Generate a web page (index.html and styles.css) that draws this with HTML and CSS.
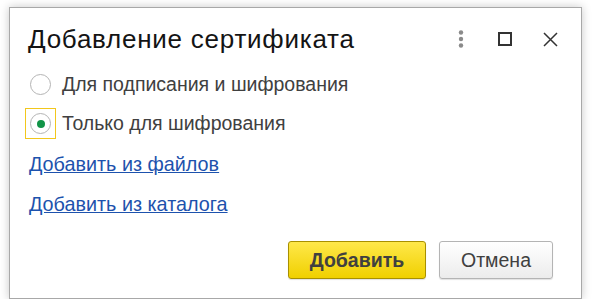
FILE: index.html
```html
<!DOCTYPE html>
<html lang="ru">
<head>
  <meta charset="UTF-8" />
  <meta name="viewport" content="width=device-width, initial-scale=1.0"/>
  <title>Добавление сертификата</title>
  <link rel="stylesheet" href="styles.css">
</head>
<body>
  <div class="dialog">
    <header class="dialog-head">
      <h1 class="dialog-title">Добавление сертификата</h1>
      <div class="dialog-tools">
        <span class="tool tool-more">
          <svg width="6" height="18" viewBox="0 0 6 18"><circle cx="3" cy="2.5" r="2.2" fill="#8a8a8a"/><circle cx="3" cy="9" r="2.2" fill="#8a8a8a"/><circle cx="3" cy="15.5" r="2.2" fill="#8a8a8a"/></svg>
        </span>
        <span class="tool tool-max">
          <svg width="14" height="14" viewBox="0 0 14 14"><rect x="1" y="1" width="12" height="12" fill="none" stroke="#333" stroke-width="2"/></svg>
        </span>
        <span class="tool tool-close">
          <svg width="15" height="15" viewBox="0 0 15 15"><path d="M1 1L14 14M14 1L1 14" stroke="#333" stroke-width="1.5" fill="none"/></svg>
        </span>
      </div>
    </header>

    <div class="dialog-body">
      <label class="radio-row">
        <span class="radio-box"><span class="radio"></span></span>
        <span class="radio-label">Для подписания и шифрования</span>
      </label>
      <label class="radio-row">
        <span class="radio-box focused"><span class="radio checked"></span></span>
        <span class="radio-label">Только для шифрования</span>
      </label>

      <a href="#" class="link link-first">Добавить из файлов</a>
      <a href="#" class="link">Добавить из каталога</a>
    </div>

    <footer class="dialog-foot">
      <button class="btn btn-primary">Добавить</button>
      <button class="btn">Отмена</button>
    </footer>
  </div>
</body>
</html>
```

FILE: styles.css
```css
* {
  margin: 0;
  padding: 0;
  box-sizing: border-box;
}

body {
  font-family: "Liberation Sans", Arial, sans-serif;
  background: #fff;
  color: #404040;
}

.dialog {
  margin: 7px 0 0 9px;
  width: 573px;
  height: 292px;
  border: 1px solid #a8a8a8;
  background: #fff;
  box-shadow: 0 0 9px rgba(0, 0, 0, 0.22);
  display: flex;
  flex-direction: column;
}

.dialog-head {
  display: flex;
  align-items: flex-start;
  padding: 16px 23px 0 18px;
  height: 45px;
}

.dialog-title {
  font-size: 26px;
  font-weight: normal;
  line-height: 30px;
  letter-spacing: 0.75px;
  color: #141414;
  flex: 1;
}

.dialog-tools {
  display: flex;
  align-items: center;
  height: 30px;
}

.tool {
  display: flex;
}

.tool-more {
  margin-right: 34px;
}

.tool-max {
  margin-right: 31px;
}

.dialog-body {
  display: flex;
  flex-direction: column;
  padding: 16px 0 0 15px;
}

.radio-row {
  display: flex;
  align-items: center;
  height: 31px;
  margin-bottom: 8px;
}

.radio-box {
  width: 31px;
  height: 31px;
  border: 1px solid transparent;
  display: flex;
  align-items: center;
  justify-content: center;
}

.radio-box.focused {
  border-color: #f2c71c;
}

.radio {
  width: 21px;
  height: 21px;
  border: 1px solid #b4b4b4;
  border-radius: 50%;
  display: flex;
  align-items: center;
  justify-content: center;
}

.radio.checked::after {
  content: "";
  width: 8px;
  height: 8px;
  border-radius: 50%;
  background: #119447;
}

.radio-label {
  margin-left: 6px;
  font-size: 19.5px;
  color: #404040;
}

.link {
  align-self: flex-start;
  margin-left: 4px;
  font-size: 19.8px;
  line-height: 22px;
  color: #1d52ad;
  text-decoration: underline;
  margin-bottom: 18px;
}

.link-first {
  margin-top: 6px;
}

.dialog-foot {
  margin-top: auto;
  display: flex;
  justify-content: flex-end;
  gap: 13px;
  padding: 0 28px 19px 0;
}

.btn {
  height: 38px;
  width: 114px;
  border: 1px solid #b4b4b4;
  border-radius: 3px;
  background: linear-gradient(#fff, #ececec);
  font-family: inherit;
  font-size: 19.5px;
  color: #404040;
  box-shadow: 0 1px 1px rgba(0, 0, 0, 0.12);
}

.btn-primary {
  width: 138px;
  border-color: #a89000;
  background: linear-gradient(#ffe84a, #f0d000);
  font-weight: bold;
}
```
